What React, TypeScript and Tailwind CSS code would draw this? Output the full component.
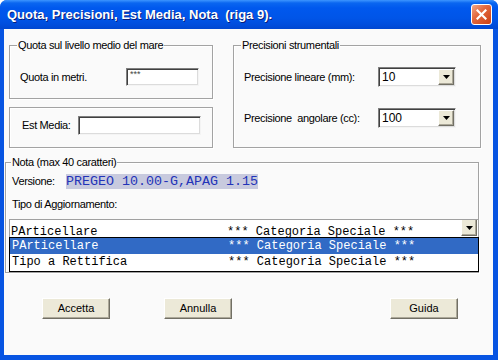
import React from "react";

const sans = "font-['Liberation_Sans',Arial,sans-serif]";
const mono = "font-['Liberation_Mono','Courier_New',monospace]";

function DropBtn({ cls = "" }: { cls?: string }) {
  return (
    <div
      className={`flex items-center justify-center bg-[#ece9d8] border border-t-white border-l-white border-r-[#716f64] border-b-[#716f64] shadow-[inset_-1px_-1px_0_#aca899] ${cls}`}
    >
      <svg width="7" height="4" viewBox="0 0 7 4">
        <path d="M0 0h7L3.5 4z" fill="#000" />
      </svg>
    </div>
  );
}

function Group({
  legend,
  legendLeft = "left-[7px]",
  className = "",
  children,
}: {
  legend?: string;
  legendLeft?: string;
  className?: string;
  children?: React.ReactNode;
}) {
  return (
    <div
      className={`relative border border-[#a3a3a3] shadow-[inset_1px_1px_0_#fff,1px_1px_0_#fff] ${className}`}
    >
      {legend && (
        <span
          className={`absolute ${legendLeft} top-[-8px] bg-[#fafafa] px-[1px] text-[11px] leading-[14px] tracking-[-0.35px] text-black whitespace-pre`}
        >
          {legend}
        </span>
      )}
      {children}
    </div>
  );
}

const sunken =
  "bg-white border border-t-[#808080] border-l-[#808080] border-r-[#f4f4f4] border-b-[#f4f4f4] shadow-[inset_1px_1px_0_#404040,inset_-1px_-1px_0_#dcdcdc]";

function Select({ value }: { value: string }) {
  return (
    <div className={`w-[78px] h-[20px] flex items-center ${sunken}`}>
      <span className="flex-1 pl-[3px] text-[12px] leading-[14px] text-black">{value}</span>
      <DropBtn cls="w-[16px] h-[16px] mr-[1px]" />
    </div>
  );
}

function Button({ label, cls = "" }: { label: string; cls?: string }) {
  return (
    <div
      className={`w-[68px] h-[21px] flex items-center justify-center bg-[#ece9d8] border border-t-white border-l-white border-r-[#716f64] border-b-[#716f64] shadow-[inset_-1px_-1px_0_#aca899] text-[11px] text-black ${cls}`}
    >
      {label}
    </div>
  );
}

export default function App() {
  return (
    <div className={`w-[498px] h-[360px] flex flex-col bg-[#0754e2] rounded-t-[7px] overflow-hidden ${sans}`}>
      {/* Title bar */}
      <div className="h-[29px] shrink-0 flex items-center bg-[linear-gradient(to_bottom,#3d95ff_0px,#0a66f0_3px,#0058ee_8px,#0055e8_18px,#004ddc_25px,#0047d0_29px)]">
        <span className="pl-[7px] flex-1 text-white font-bold text-[13px] tracking-[0px] whitespace-pre [text-shadow:1px_1px_0_#0a1e7a]">
          Quota, Precisioni, Est Media, Nota  (riga 9).
        </span>
        <div className="w-[21px] h-[21px] mr-[6px] rounded-[3px] border border-white bg-[linear-gradient(135deg,#f2a888_0%,#e3693f_40%,#cc4014_100%)] flex items-center justify-center">
          <svg width="11" height="11" viewBox="0 0 11 11">
            <path d="M1.5 1.5L9.5 9.5M9.5 1.5L1.5 9.5" stroke="#fff" strokeWidth="2.2" strokeLinecap="square" />
          </svg>
        </div>
      </div>

      {/* Body */}
      <div className="flex-1 ml-[4px] mr-[5px] mb-[5px] bg-[#fafafa] flex flex-col text-[11px] text-black">
        {/* Top section */}
        <div className="flex mt-[16px] ml-[5px]">
          <div className="flex flex-col w-[204px]">
            <Group legend="Quota sul livello medio del mare" className="h-[54px]">
              <div className="flex items-center mt-[22px] pl-[10px]">
                <span className="w-[106px] tracking-[-0.35px]">Quota in metri.</span>
                <div className={`w-[73px] h-[18px] flex items-start pl-[3px] ${sunken}`}>
                  <span className="text-[9px] leading-[10px] text-[#444]">***</span>
                </div>
              </div>
            </Group>
            <Group className="h-[41px] mt-[8px]">
              <div className="flex items-center mt-[8px] pl-[12px]">
                <span className="w-[56px] tracking-[-0.35px]">Est Media:</span>
                <div className={`w-[123px] h-[19px] ${sunken}`} />
              </div>
            </Group>
          </div>

          <Group legend="Precisioni strumentali" className="ml-[20px] w-[248px] h-[103px]">
            <div className="flex items-center mt-[21px] pl-[10px]">
              <span className="w-[134px] tracking-[-0.35px]">Precisione lineare (mm):</span>
              <Select value="10" />
            </div>
            <div className="flex items-center mt-[21px] pl-[10px]">
              <span className="w-[134px] tracking-[-0.35px] whitespace-pre">Precisione  angolare (cc):</span>
              <Select value="100" />
            </div>
          </Group>
        </div>

        {/* Nota group */}
        <Group
          legend="Nota (max 40 caratteri)"
          legendLeft="left-[5px]"
          className="ml-[1px] mt-[14px] w-[474px] h-[111px]"
        >
          <div className="flex items-center mt-[11px] pl-[6px] h-[15px]">
            <span className="w-[54px] tracking-[-0.35px]">Versione:</span>
            <span className={`${mono} h-[15px] w-[192px] bg-[#c8cade] text-[#2233b8] text-[13.33px] leading-[15px] whitespace-pre`}>
              PREGEO 10.00-G,APAG 1.15
            </span>
          </div>
          <div className="mt-[9px] pl-[6px] leading-[13px] tracking-[-0.35px]">Tipo di Aggiornamento:</div>
          <div className="ml-[3px] mt-[8px] w-[469px] h-[19px] flex bg-white border-t border-l border-[#a0a0a0] overflow-hidden">
            <span className={`${mono} flex-1 pl-[1px] pt-[4px] text-[12px] leading-[16px] whitespace-pre`}>
              {"PArticellare                  *** Categoria Speciale ***"}
            </span>
            <DropBtn cls="w-[16px] h-[17px] mr-[1px] mt-[-1px]" />
          </div>
          {/* open dropdown list */}
          <div className={`absolute left-[3px] top-[74px] w-[470px] h-[35px] border border-black bg-white flex flex-col ${mono} text-[12px]`}>
            <div className="h-[16px] leading-[16px] bg-[#316ac5] text-white pl-[2px] whitespace-pre">
              {"PArticellare                  *** Categoria Speciale ***"}
            </div>
            <div className="h-[16px] leading-[16px] text-black pl-[2px] whitespace-pre">
              {"Tipo a Rettifica              *** Categoria Speciale ***"}
            </div>
          </div>
        </Group>

        {/* Buttons */}
        <div className="flex mt-[25px]">
          <Button label="Accetta" cls="ml-[38px]" />
          <Button label="Annulla" cls="ml-[54px]" />
          <Button label="Guida" cls="ml-[158px]" />
        </div>
      </div>
    </div>
  );
}
